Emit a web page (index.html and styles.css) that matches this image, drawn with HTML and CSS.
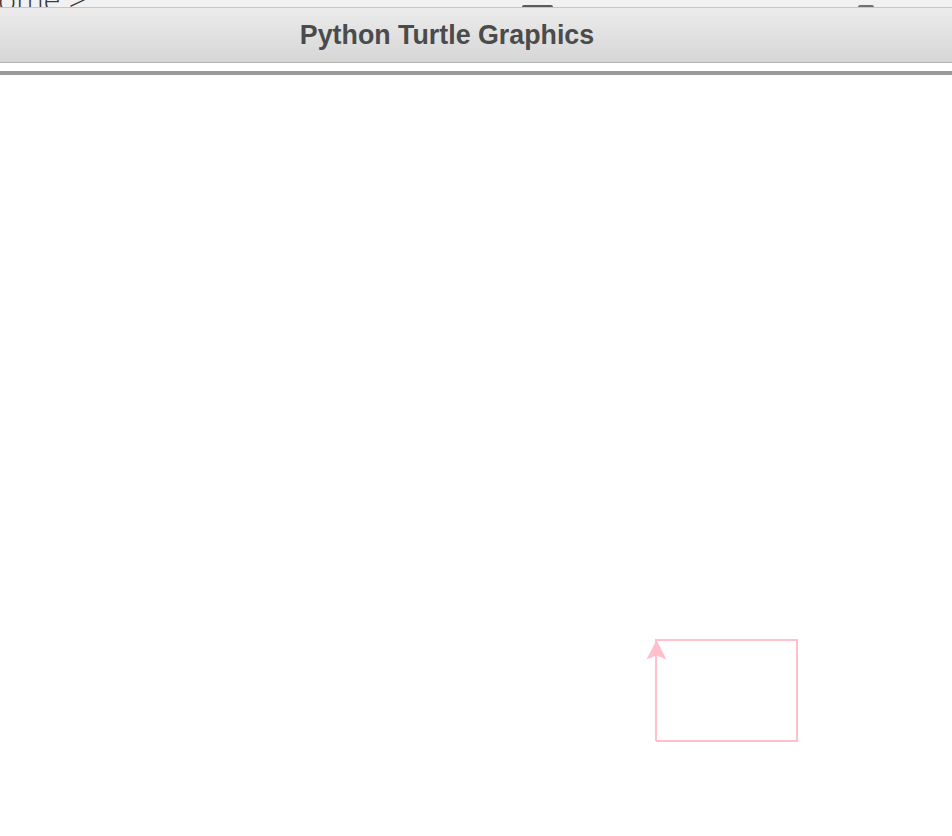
FILE: index.html
```html
<!DOCTYPE html>
<html>
<head>
<meta charset="utf-8">
<link rel="stylesheet" href="styles.css">
</head>
<body>
<div class="topstrip">
  <div class="crumb-box"><span class="crumb">ome &gt;</span></div>
  <div class="mark mark-a"></div>
  <div class="gap-b"></div>
  <div class="mark mark-b"></div>
</div>
<div class="titlebar"><span class="title">Python Turtle Graphics</span></div>
<div class="spacer"></div>
<div class="rule"></div>
<div class="canvas">
  <svg class="drawing" width="952" height="761" viewBox="0 0 952 761">
    <polyline points="656,666 797,666 797,565 656,565 656,584" fill="none" stroke="#ffc0cb" stroke-width="2"/>
    <path d="M656,666 L656,575" fill="none" stroke="#ffc0cb" stroke-width="2"/>
    <polygon points="656.5,565 646.5,584.5 656.5,580.5 666.5,584.5" fill="#ffc0cb"/>
  </svg>
</div>
</body>
</html>
```
FILE: styles.css
```css
html, body {
  margin: 0;
  padding: 0;
  background: #ffffff;
}
body {
  width: 952px;
  height: 836px;
  overflow: hidden;
  font-family: "Liberation Sans", Arial, sans-serif;
}
.topstrip {
  height: 7px;
  background: #f1f1f1;
  border-bottom: 1px solid #c6c6c6;
  display: flex;
  align-items: flex-end;
  overflow: hidden;
}
.crumb-box {
  width: 522px;
  height: 7px;
  flex: none;
  overflow: hidden;
  display: flex;
  align-items: flex-end;
}
.crumb {
  font-family: "Open Sans", "Liberation Sans", sans-serif;
  font-weight: 300;
  font-size: 31px;
  line-height: 31px;
  color: #3a3a3a;
  margin-bottom: -8px;
  margin-left: -2px;
  white-space: nowrap;
}
.mark {
  flex: none;
  height: 2px;
  border-radius: 3px 3px 0 0;
  margin-bottom: 0;
}
.mark-a {
  width: 31px;
  background: #5a5a5a;
}
.gap-b {
  width: 305px;
  flex: none;
}
.mark-b {
  width: 16px;
  background: #707070;
  border-radius: 8px 8px 0 0;
}
.titlebar {
  height: 54px;
  background: linear-gradient(#ececec, #d6d6d6);
  border-bottom: 1px solid #b4b4b4;
  display: flex;
  align-items: center;
  justify-content: center;
  padding-right: 58px;
}
.title {
  font-family: "Liberation Sans", Arial, sans-serif;
  font-weight: bold;
  font-size: 26.8px;
  color: #4b4b4b;
}
.spacer {
  height: 8px;
  background: #ffffff;
}
.rule {
  height: 4px;
  background: #9a9a9a;
}
.canvas {
  height: 761px;
  background: #ffffff;
}
.drawing {
  display: block;
}
```
